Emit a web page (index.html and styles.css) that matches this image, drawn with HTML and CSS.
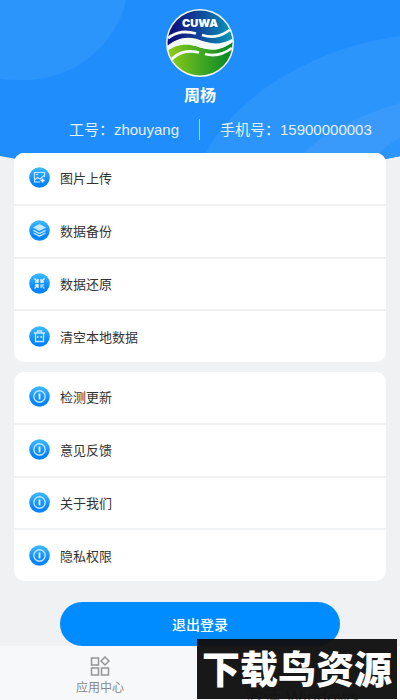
FILE: index.html
```html
<!DOCTYPE html>
<html lang="zh-CN">
<head>
<meta charset="utf-8">
<meta name="viewport" content="width=device-width, initial-scale=1">
<title>我的</title>
<link rel="stylesheet" href="styles.css">
</head>
<body>
<svg class="defs" aria-hidden="true">
  <defs>
    <linearGradient id="badge" x1="0" y1="0" x2="0" y2="1"><stop offset="0" stop-color="#3fbcff"/><stop offset=".75" stop-color="#0584ff"/></linearGradient>
    <symbol id="info" viewBox="0 0 21 21"><circle cx="10.500" cy="10.500" r="10.300" fill="url(#badge)"/><circle cx="10.500" cy="10.500" r="5.700" fill="none" stroke="#c4e4ff" stroke-width="1.400"/><path d="M10.500 7.500v6" stroke="#e5f4ff" stroke-width="1.800"/></symbol>
  </defs>
</svg>
<main class="page">
  <header class="hero">
    <svg class="hero-bg" viewBox="0 0 400 175" preserveAspectRatio="none" aria-hidden="true">
      <path d="M0 0H400V156Q200 196 0 156Z" fill="#208dfc"/>
      <path d="M0 0H126C117 43 76 80 24 80Q10 80 0 79Z" fill="#2c95fc"/>
      <path d="M400 36C315 47 235 96 206 153L220 170H330L400 156Z" fill="#2c95fc"/>
      <path d="M400 103C355 117 325 132 304 153L320 168H340L400 156Z" fill="#3a9afb"/>
      <path d="M400 138Q388 144 379 153L381 160L400 156Z" fill="#2c95fc"/>
    </svg>
    <svg class="logo" viewBox="0 0 68 68" role="img" aria-label="CUWA">
      <defs>
        <linearGradient id="sky"><stop offset=".1" stop-color="#10107c"/><stop offset=".5" stop-color="#10479b"/><stop offset="1" stop-color="#079cbc"/></linearGradient>
        <linearGradient id="field"><stop offset=".1" stop-color="#86c719"/><stop offset=".5" stop-color="#45a922"/><stop offset="1" stop-color="#008428"/></linearGradient>
        <clipPath id="disc"><circle cx="34" cy="34" r="32.500"/></clipPath>
      </defs>
      <circle cx="34" cy="34" r="34" fill="#f4faf2"/>
      <g clip-path="url(#disc)">
        <path d="M0 0H68V30C52 43 43 34 31 31C18 27 10 31 0 38Z" fill="url(#sky)"/>
        <path d="M0 43C9 35 20 34 30 37C43 42 54 43 68 32V68H0Z" fill="url(#field)"/>
        <path d="M0 38C10 30 18 27 31 30C43 34 52 38 68 29V32C54 43 43 42 30 37C20 34 9 35 0 43Z" fill="#f6fbfa"/>
        <g fill="none" stroke="#f6fbfa" stroke-width="2.800">
          <path d="M2 29C12 22 20 22 30 24.500"/><path d="M36 26C49 30 57 26 65 20"/>
          <path d="M4 52C13 42 22 41 33 43.500"/><path d="M39 45C50 48 58 45 66 39"/>
        </g>
      </g>
      <text class="logo-text" x="34" y="18" text-anchor="middle">CUWA</text>
    </svg>
    <h1 class="name">周杨</h1>
    <div class="meta"><span class="job">工号：zhouyang</span><span class="phone">手机号：15900000003</span></div>
  </header>
  <nav class="card" aria-label="数据">
    <a class="row" href="#upload"><svg class="icon" viewBox="0 0 21 21"><circle cx="10.500" cy="10.500" r="10.300" fill="url(#badge)"/><g fill="none" stroke="#c9e7ff" stroke-width="1.100"><path d="M15.500 10V5.500H5.500V15H11"/><path d="M5.500 13L8.500 10.500L11 12L15 8.500M7 7.500h2"/></g><path d="M13.500 11.500v4M11.500 13.500h4" stroke="#fff" stroke-width="1.500"/></svg>图片上传</a>
    <a class="row" href="#backup"><svg class="icon" viewBox="0 0 21 21"><circle cx="10.500" cy="10.500" r="10.300" fill="url(#badge)"/><path d="M10.500 4L17 7.500L10.500 11L4 7.500Z" fill="#c9e7ff"/><path d="M4.500 10.300L10.500 13.500L16.500 10.300M4.500 13L10.500 16.200L16.500 13" fill="none" stroke="#c9e7ff" stroke-width="1.400"/></svg>数据备份</a>
    <a class="row" href="#restore"><svg class="icon" viewBox="0 0 21 21"><circle cx="10.500" cy="10.500" r="10.300" fill="url(#badge)"/><g fill="none" stroke="#e5f4ff" stroke-width="1.400"><path d="M5.500 5.500L9 9M9 6V9H6M15.500 5.500L12 9M12 6V9H15M5.500 15.500L9 12M6 12H9V15"/><path d="M12 15V12H15M13 13L15.500 15.500" stroke="#9dd3ff"/></g></svg>数据还原</a>
    <a class="row" href="#clear"><svg class="icon" viewBox="0 0 21 21"><circle cx="10.500" cy="10.500" r="10.300" fill="url(#badge)"/><path d="M5 7H16M8.500 7V5H12.500V7M6.500 7V15.500H14.500V7" fill="none" stroke="#c9e7ff" stroke-width="1.300"/><path d="M8 11h1.500M11.500 11H13" stroke="#fff" stroke-width="1.500"/></svg>清空本地数据</a>
  </nav>
  <nav class="card" aria-label="关于">
    <a class="row" href="#update"><svg class="icon"><use href="#info"/></svg>检测更新</a>
    <a class="row" href="#feedback"><svg class="icon"><use href="#info"/></svg>意见反馈</a>
    <a class="row" href="#about"><svg class="icon"><use href="#info"/></svg>关于我们</a>
    <a class="row" href="#privacy"><svg class="icon"><use href="#info"/></svg>隐私权限</a>
  </nav>
  <button class="logout" type="button">退出登录</button>
  <footer class="tabs">
    <a class="tab" href="#apps"><svg class="tab-icon" viewBox="0 0 20 20" aria-hidden="true"><g fill="none" stroke="#929496" stroke-width="1.500"><path d="M1.500 2h7v7h-7zM1.500 12h7v7h-7zM11.500 12h7v7h-7zM15 1L19 5L15 9L11 5Z"/></g></svg>应用中心</a>
  </footer>
  <div class="activation">激活 Windows</div>
  <div class="watermark">下载鸟资源</div>
</main>
</body>
</html>
```
FILE: styles.css
```css
* { box-sizing: border-box; }
body { margin: 0; background: #f0f1f3; color: #333; font-family: "Liberation Sans", "Noto Sans CJK SC", sans-serif; }
a { color: inherit; text-decoration: none; }
.defs { position: absolute; width: 0; height: 0; }
.page { position: relative; min-height: 100vh; display: flex; flex-direction: column; overflow: hidden; }
.hero { position: relative; display: flex; flex-direction: column; align-items: center; padding-top: 9px; color: #fff; }
.hero-bg { position: absolute; z-index: -1; top: 0; left: 0; width: 100%; height: 175px; }
.logo { width: 68px; height: 68px; }
.logo-text { fill: #fff; font: 900 11px Inter, "Liberation Sans", sans-serif; }
.name { margin: 8px 0 0; font-size: 16px; line-height: 22px; }
.meta { align-self: stretch; display: grid; grid-template-columns: 1fr 1fr; margin: 12px 0 13px; font-size: 15px; line-height: 21px; color: #e4f0fc; }
.job { padding-right: 20px; border-right: 1px solid #a5d1fb; text-align: right; }
.phone { padding-left: 20px; }
.card { display: grid; grid-auto-rows: 1fr; gap: 2px; min-height: 209px; margin: 0 14px 10px; border-radius: 10px; overflow: hidden; background: #f0f1f3; }
.row { display: flex; align-items: center; gap: 10px; padding: 0 15px 1px; background: #fff; font-size: 13px; }
.icon { width: 21px; height: 21px; flex: none; }
.logout { align-self: center; width: 70%; height: 44px; margin-top: 11px; border: 0; border-radius: 22px; background: #008cff; color: #fff; font: 500 14px "Noto Sans CJK SC", sans-serif; }
.tabs { flex: 1; display: grid; grid-template-columns: 1fr 1fr; background: #f7f8fa; }
.tab { display: flex; flex-direction: column; align-items: center; padding-top: 10px; gap: 3px; font-size: 12px; line-height: 18px; color: #88898b; }
.tab-icon { width: 20px; height: 20px; }
.activation { position: absolute; left: 245px; bottom: -10px; font-size: 18px; line-height: 24px; color: #888; }
.watermark { position: absolute; right: 3px; bottom: 1px; width: 200px; height: 60px; background: rgb(17 17 17 / 97%); color: #fff; font: 900 38px/56px "Noto Sans CJK SC", sans-serif; font-style: oblique 8deg; text-align: center; white-space: nowrap; }
```
